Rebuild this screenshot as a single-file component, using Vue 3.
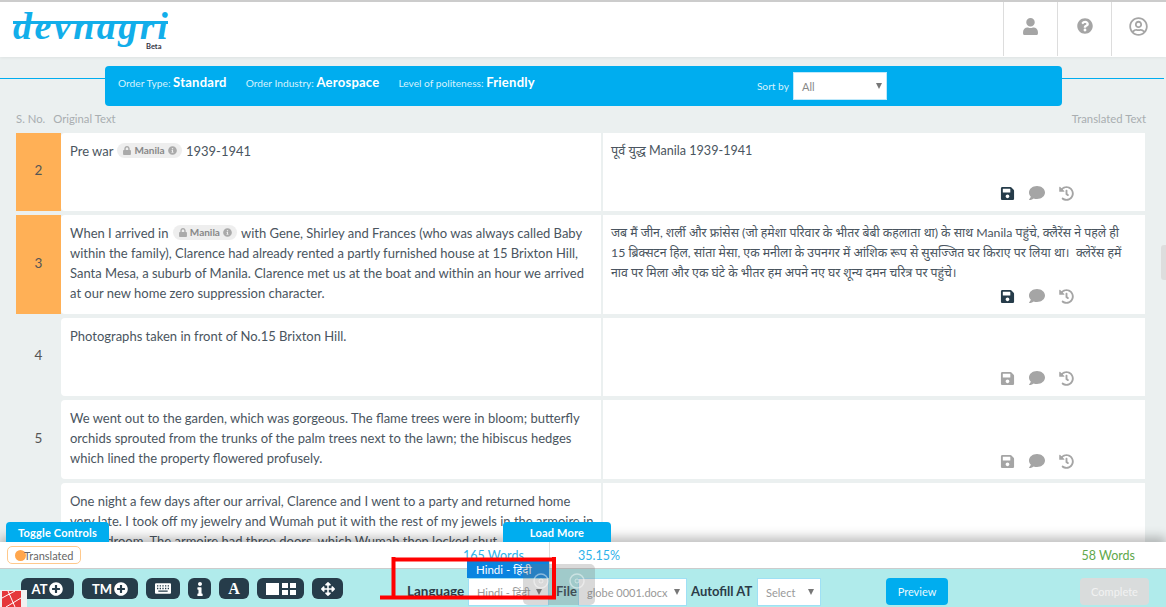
<script setup>
const icons = {
  save: { box: '0 0 448 512', d: 'M433.941 129.941l-83.882-83.882A48 48 0 0 0 316.118 32H48C21.49 32 0 53.49 0 80v352c0 26.51 21.49 48 48 48h352c26.51 0 48-21.49 48-48V163.882a48 48 0 0 0-14.059-33.941zM224 416c-35.346 0-64-28.654-64-64 0-35.346 28.654-64 64-64s64 28.654 64 64c0 35.346-28.654 64-64 64zm96-304.52V212c0 6.627-5.373 12-12 12H76c-6.627 0-12-5.373-12-12V108c0-6.627 5.373-12 12-12h228.52c3.183 0 6.235 1.264 8.485 3.515l3.48 3.48A11.996 11.996 0 0 1 320 111.48z' },
  comment: { box: '0 0 512 512', d: 'M256 32C114.6 32 0 125.1 0 240c0 49.6 21.4 95 57 130.7C44.5 421.1 2.7 466 2.2 466.5c-2.2 2.3-2.8 5.7-1.5 8.7S4.8 480 8 480c66.3 0 116-31.8 140.6-51.4 32.7 12.3 69 19.4 107.4 19.4 141.4 0 256-93.1 256-208S397.4 32 256 32z' },
  history: { box: '0 0 512 512', d: 'M504 255.531c.253 136.64-111.18 248.372-247.82 248.468-59.015.042-113.223-20.53-155.822-54.911-11.077-8.94-11.905-25.541-1.839-35.607l11.267-11.267c8.609-8.609 22.353-9.551 31.891-1.984C173.062 425.135 212.781 440 256 440c101.705 0 184-82.311 184-184 0-101.705-82.311-184-184-184-48.814 0-93.149 18.969-126.068 49.932l50.754 50.754c10.08 10.08 2.941 27.314-11.313 27.314H24c-8.837 0-16-7.163-16-16V38.627c0-14.254 17.234-21.393 27.314-11.314l49.372 49.372C129.209 34.136 189.552 8 256 8c136.81 0 247.747 110.78 248 247.531zm-180.912 78.784l9.823-12.63c8.138-10.463 6.253-25.542-4.21-33.679L288 256.349V152c0-13.255-10.745-24-24-24h-16c-13.255 0-24 10.745-24 24v135.651l65.409 50.874c10.463 8.137 25.541 6.253 33.679-4.21z' },
  user: { box: '0 0 448 512', d: 'M224 256c70.7 0 128-57.3 128-128S294.7 0 224 0 96 57.3 96 128s57.3 128 128 128zm89.6 32h-16.7c-22.2 10.2-46.9 16-72.9 16s-50.6-5.8-72.9-16h-16.7C60.2 288 0 348.2 0 422.4V464c0 26.5 21.5 48 48 48h352c26.5 0 48-21.5 48-48v-41.6c0-74.2-60.2-134.4-134.4-134.4z' },
  question: { box: '0 0 512 512', d: 'M504 256c0 136.997-111.043 248-248 248S8 392.997 8 256C8 119.083 119.043 8 256 8s248 111.083 248 248zM262.655 90c-54.497 0-89.255 22.957-116.549 63.758-3.536 5.286-2.353 12.415 2.715 16.258l34.699 26.31c5.205 3.947 12.621 3.008 16.665-2.122 17.864-22.658 30.113-35.797 57.303-35.797 20.429 0 45.698 13.148 45.698 32.958 0 14.976-12.363 22.667-32.534 33.976C247.128 238.528 216 254.941 216 296v4c0 6.627 5.373 12 12 12h56c6.627 0 12-5.373 12-12v-1.333c0-28.462 83.186-29.647 83.186-106.667 0-58.002-60.165-102-116.531-102zM256 338c-25.365 0-46 20.635-46 46 0 25.364 20.635 46 46 46s46-20.636 46-46c0-25.365-20.635-46-46-46z' },
  account: { box: '0 0 496 512', d: 'M248 104c-53 0-96 43-96 96s43 96 96 96 96-43 96-96-43-96-96-96zm0 144c-26.5 0-48-21.5-48-48s21.5-48 48-48 48 21.5 48 48-21.5 48-48 48zm0-240C111 8 0 119 0 256s111 248 248 248 248-111 248-248S385 8 248 8zm0 448c-49.7 0-95.1-18.3-130.1-48.4 14.9-23 40.4-38.6 69.6-39.5 20.8 6.4 40.6 9.6 60.5 9.6s39.7-3.1 60.5-9.6c29.2 1 54.7 16.5 69.6 39.5-35 30.1-80.4 48.4-130.1 48.4zm162.7-84.1c-24.4-31.4-62.1-51.9-105.1-51.9-10.2 0-26 9.6-57.6 9.6-31.5 0-47.4-9.6-57.6-9.6-42.9 0-80.6 20.5-105.1 51.9C61.9 339.2 48 299.2 48 256c0-110.3 89.7-200 200-200s200 89.7 200 200c0 43.2-13.9 83.2-37.3 115.9z' },
  plus: { box: '0 0 512 512', d: 'M256 8C119 8 8 119 8 256s111 248 248 248 248-111 248-248S393 8 256 8zm144 276c0 6.6-5.4 12-12 12h-92v92c0 6.6-5.4 12-12 12h-56c-6.6 0-12-5.4-12-12v-92h-92c-6.6 0-12-5.4-12-12v-56c0-6.6 5.4-12 12-12h92v-92c0-6.6 5.4-12 12-12h56c6.6 0 12 5.4 12 12v92h92c6.6 0 12 5.4 12 12v56z' },
  info: { box: '0 0 192 512', d: 'M20 424.229h20V279.771H20c-11.046 0-20-8.954-20-20V212c0-11.046 8.954-20 20-20h112c11.046 0 20 8.954 20 20v212.229h20c11.046 0 20 8.954 20 20V492c0 11.046-8.954 20-20 20H20c-11.046 0-20-8.954-20-20v-47.771c0-11.046 8.954-20 20-20zM96 0C56.235 0 24 32.235 24 72s32.235 72 72 72 72-32.235 72-72S135.764 0 96 0z' },
  move: { box: '0 0 512 512', d: 'M352.201 425.775l-79.196 79.196c-9.373 9.373-24.568 9.373-33.941 0l-79.196-79.196c-15.119-15.119-4.411-40.971 16.971-40.97h51.162L228 284H127.196v51.162c0 21.382-25.851 32.09-40.971 16.971L7.029 272.937c-9.373-9.373-9.373-24.569 0-33.941L86.225 159.8c15.119-15.119 40.971-4.411 40.971 16.971V228H228V127.196h-51.23c-21.382 0-32.09-25.851-16.971-40.971l79.196-79.196c9.373-9.373 24.568-9.373 33.941 0l79.196 79.196c15.119 15.119 4.411 40.971-16.971 40.971h-51.162V228h100.804v-51.162c0-21.382 25.851-32.09 40.97-16.971l79.196 79.196c9.373 9.373 9.373 24.569 0 33.941L425.773 352.2c-15.119 15.119-40.971 4.411-40.97-16.971V284H284v100.804h51.23c21.382 0 32.09 25.851 16.971 40.971z' },
  lock: { box: '0 0 448 512', d: 'M400 224h-24v-72C376 68.2 307.8 0 224 0S72 68.2 72 152v72H48c-26.5 0-48 21.5-48 48v192c0 26.5 21.5 48 48 48h352c26.5 0 48-21.5 48-48V272c0-26.5-21.5-48-48-48zm-104 0H152v-72c0-39.7 32.3-72 72-72s72 32.3 72 72v72z' },
  infoCircle: { box: '0 0 512 512', d: 'M256 8C119.043 8 8 119.083 8 256c0 136.997 111.043 248 248 248s248-111.003 248-248C504 119.083 392.957 8 256 8zm0 110c23.196 0 42 18.804 42 42s-18.804 42-42 42-42-18.804-42-42 18.804-42 42-42zm56 254c0 6.627-5.373 12-12 12h-88c-6.627 0-12-5.373-12-12v-24c0-6.627 5.373-12 12-12h12v-64h-12c-6.627 0-12-5.373-12-12v-24c0-6.627 5.373-12 12-12h64c6.627 0 12 5.373 12 12v100h12c6.627 0 12 5.373 12 12v24z' }
}

const headerIcons = [
  { ...icons.user, size: 17 },
  { ...icons.question, size: 16 },
  { ...icons.account, size: 19 }
]

// line breaks kept by hand, the widths of the fallback font differ a little
const rows = [
  { no: 2, done: true, before: 'Pre war', chip: true, after: '1939-1941', hi: 'पूर्व युद्ध Manila 1939-1941' },
  { no: 3, done: true, before: 'When I arrived in', chip: true, after: 'with Gene, Shirley and Frances (who was always called Baby\nwithin the family), Clarence had already rented a partly furnished house at 15 Brixton Hill,\nSanta Mesa, a suburb of Manila. Clarence met us at the boat and within an hour we arrived\nat our new home zero suppression character.', hi: 'जब मैं जीन, शर्ली और फ्रांसेस (जो हमेशा परिवार के भीतर बेबी कहलाता था) के साथ Manila पहुंचे, क्लैरेंस ने पहले ही\n15 ब्रिक्सटन हिल, सांता मेसा, एक मनीला के उपनगर में आंशिक रूप से सुसज्जित घर किराए पर लिया था।  क्लेरेंस हमें\nनाव पर मिला और एक घंटे के भीतर हम अपने नए घर शून्य दमन चरित्र पर पहुंचे।' },
  { no: 4, before: 'Photographs taken in front of No.15 Brixton Hill.', hi: '' },
  { no: 5, before: 'We went out to the garden, which was gorgeous. The flame trees were in bloom; butterfly\norchids sprouted from the trunks of the palm trees next to the lawn; the hibiscus hedges\nwhich lined the property flowered profusely.', hi: '' },
  { no: 6, last: true, before: 'One night a few days after our arrival, Clarence and I went to a party and returned home\nvery late. I took off my jewelry and Wumah put it with the rest of my jewels in the armoire in\nthe bedroom. The armoire had three doors, which Wumah then locked shut', hi: '' }
]

const actions = [icons.save, icons.comment, icons.history]
</script>

<template>
  <div class="page">
    <header class="top">
      <div class="logo">
        <span class="logo-word">devnagri</span>
        <span class="logo-bar"></span>
        <span class="logo-beta">Beta</span>
      </div>
      <div class="top-cells">
        <div v-for="(ic, i) in headerIcons" :key="i" class="top-cell">
          <svg :viewBox="ic.box" class="top-icon" :style="{ width: ic.size + 'px', height: ic.size + 'px' }"><path :d="ic.d" /></svg>
        </div>
      </div>
    </header>

    <div class="order-wrap">
      <div class="order-line left"></div>
      <div class="order-bar">
        <span class="order-item">Order Type: <b>Standard</b></span>
        <span class="order-item">Order Industry: <b>Aerospace</b></span>
        <span class="order-item">Level of politeness: <b>Friendly</b></span>
        <div class="sort">
          <span class="sort-label">Sort by</span>
          <div class="sort-select"><span>All</span><i class="caret"></i></div>
        </div>
      </div>
      <div class="order-line right"></div>
    </div>

    <div class="table-head">
      <span class="th-no">S. No.</span>
      <span>Original Text</span>
      <span class="th-right">Translated Text</span>
    </div>

    <div class="rows">
      <div v-for="r in rows" :key="r.no" class="row" :class="{ last: r.last }">
        <div class="no" :class="{ done: r.done }">{{ r.no }}</div>
        <div class="src">
          {{ r.before }}
          <span v-if="r.chip" class="chip">
            <svg :viewBox="icons.lock.box" class="chip-lock"><path :d="icons.lock.d" /></svg>
            Manila
            <svg :viewBox="icons.infoCircle.box" class="chip-info"><path :d="icons.infoCircle.d" /></svg>
          </span>
          {{ r.after }}
        </div>
        <div class="dst">
          <div class="dst-text">{{ r.hi }}</div>
          <div v-if="!r.last" class="actions" :class="{ done: r.done }">
            <svg v-for="(a, i) in actions" :key="i" :viewBox="a.box" class="act"><path :d="a.d" /></svg>
          </div>
        </div>
      </div>
    </div>

    <div class="scroll-thumb"></div>

    <footer class="foot">
      <button class="tab toggle">Toggle Controls</button>
      <button class="tab more">Load More</button>

      <div class="stats">
        <span class="status"><i class="dot"></i>Translated</span>
        <span class="words">165 Words</span>
        <span class="stat-sep"></span>
        <span class="pct">35.15%</span>
        <span class="green">58 Words</span>
      </div>

      <div class="tools">
        <button class="tool at">AT<svg :viewBox="icons.plus.box" class="plus"><path :d="icons.plus.d" /></svg></button>
        <button class="tool tm">TM<svg :viewBox="icons.plus.box" class="plus"><path :d="icons.plus.d" /></svg></button>
        <button class="tool kb">
          <svg viewBox="0 0 24 16" class="kb-icon">
            <path fill-rule="evenodd" d="M1.500 0h21A1.500 1.500 0 0 1 24 1.500v13a1.500 1.500 0 0 1-1.500 1.500h-21A1.500 1.500 0 0 1 0 14.500v-13A1.500 1.500 0 0 1 1.500 0zM3 3v2h2V3zm4 0v2h2V3zm4 0v2h2V3zm4 0v2h2V3zm4 0v2h2V3zM3 7v2h2V7zm4 0v2h2V7zm4 0v2h2V7zm4 0v2h2V7zm4 0v2h2V7zM5 11v2h14v-2z" />
          </svg>
        </button>
        <button class="tool ib"><svg :viewBox="icons.info.box" class="i-icon"><path :d="icons.info.d" /></svg></button>
        <button class="tool font">A</button>
        <button class="tool grid">
          <span class="square"></span>
          <span class="quad"><i></i><i></i><i></i><i></i></span>
        </button>
        <button class="tool mv"><svg :viewBox="icons.move.box" class="mv-icon"><path :d="icons.move.d" /></svg></button>

        <label class="lbl lang">Language</label>
        <div class="sel s-lang"><span>Hindi - हिंदी</span><i class="caret"></i></div>
        <label class="lbl file">File</label>
        <div class="sel s-file"><span>globe 0001.docx</span><i class="caret"></i></div>
        <label class="lbl auto">Autofill AT</label>
        <div class="sel s-auto"><span>Select</span><i class="caret"></i></div>
        <button class="cta preview">Preview</button>
        <button class="cta complete">Complete</button>
      </div>

      <div class="lang-option">Hindi - हिंदी</div>

      <div class="loader">
        <svg viewBox="0 0 72 41" width="72" height="41" fill="none" stroke="#fff" stroke-opacity=".45">
          <circle cx="18" cy="17" r="7" stroke-width="1.500" />
          <circle cx="18" cy="17" r="2" stroke-width="1" />
          <circle cx="54" cy="17" r="7" stroke-width="1.500" />
          <circle cx="54" cy="17" r="2" stroke-width="1" />
        </svg>
      </div>

      <svg class="brand" viewBox="0 0 27 17" width="27" height="17">
        <rect width="27" height="17" fill="#f1f1f1" />
        <rect x="2" y="1" width="19" height="16" fill="#e5383b" />
        <path d="M2 8l13-7M6 17l15-9M8 1l7 16" stroke="#fff" stroke-width="1" fill="none" />
      </svg>
    </footer>

    <svg class="markup" viewBox="0 0 190 50" width="190" height="50" fill="none" stroke="#f00" stroke-width="4">
      <path d="M14.500 5v42M14 7.500h162M175 5v42M1 45.500h176" />
    </svg>
  </div>
</template>

<style scoped>
.page {
  position: relative;
  height: 607px;
  overflow: hidden;
  background: #ebf0f0;
  font-family: Lato, "Noto Sans", sans-serif;
  color: #4a5560;
}
button {
  font-family: inherit;
  border: none;
  cursor: pointer;
}
.top {
  display: flex;
  justify-content: space-between;
  height: 55px;
  background: #fff;
  border-top: 2px solid #ccc;
  box-shadow: 0 1px 3px rgba(0, 0, 0, 0.06);
}
.logo {
  position: relative;
  margin-left: 13px;
  width: 155px;
  height: 55px;
  z-index: 1;
}
.logo-word {
  display: block;
  margin-top: 5px;
  font: italic 700 38px/38px "Liberation Serif", serif;
  letter-spacing: 2.5px;
  color: #12aeea;
}
.logo-bar {
  position: absolute;
  left: 0;
  width: 155px;
  top: 19px;
  height: 3px;
  background: #12aeea;
}
.logo-beta {
  position: absolute;
  left: 133px;
  top: 41px;
  font-size: 7.5px;
  line-height: 8px;
  font-weight: 700;
  color: #334;
}
.top-cells {
  display: flex;
  margin-right: 1px;
}
.top-cell {
  width: 54px;
  border-left: 1px solid #ddd;
  display: flex;
  align-items: center;
  justify-content: center;
  height: 54px;
  padding-bottom: 6px;
  box-sizing: border-box;
}
.top-icon {
  fill: #a5a5a5;
}
.order-wrap {
  display: flex;
  margin-top: 9px;
}
.order-line {
  height: 1px;
  margin-top: 12px;
  background: #00adef;
}
.order-line.left {
  width: 105px;
}
.order-line.right {
  width: 102px;
}
.order-bar {
  width: 957px;
  height: 40px;
  display: flex;
  align-items: flex-start;
  padding: 8px 0 0 13px;
  box-sizing: border-box;
  background: #00adef;
  border-radius: 4px;
  color: #d6f2fd;
  font-size: 10.2px;
}
.order-item {
  margin-right: 19px;
  line-height: 16px;
}
.order-item b {
  font-size: 13px;
  font-weight: 700;
  color: #fff;
  letter-spacing: 0.25px;
}
.order-item:last-of-type {
  margin-right: 0;
}
.sort {
  display: flex;
  align-items: center;
  margin-left: 222px;
  margin-top: -2px;
}
.sort-label {
  margin-right: 4px;
}
.sort-select {
  width: 94px;
  height: 28px;
  box-sizing: border-box;
  display: flex;
  align-items: center;
  justify-content: space-between;
  padding: 0 4px 0 8px;
  background: #fff;
  border: 1px solid #bfe9fb;
  color: #888;
  font-size: 11px;
}
.caret {
  width: 0;
  height: 0;
  border-left: 3px solid transparent;
  border-right: 3px solid transparent;
  border-top: 6px solid #777;
}
.table-head {
  display: flex;
  padding: 6px 20px 0 16px;
  height: 21px;
  font-size: 11.3px;
  line-height: 14px;
  color: #a9aeb0;
  box-sizing: border-box;
}
.th-no {
  margin-right: 8px;
}
.th-right {
  margin-left: auto;
}
.rows {
  margin-top: 6px;
  padding-left: 16px;
  width: 1145px;
  box-sizing: border-box;
}
.row {
  display: flex;
  min-height: 78px;
  margin-bottom: 4px;
}
.row.last {
  min-height: 99px;
}
.no {
  width: 45px;
  flex: none;
  display: flex;
  align-items: center;
  justify-content: center;
  box-sizing: border-box;
  padding-bottom: 4px;
  font-size: 13.5px;
  color: #555;
}
.no.done {
  background: #ffb056;
}
.src {
  width: 540px;
  flex: none;
  box-sizing: border-box;
  padding: 8px 0 11px 9px;
  background: #fff;
  border-radius: 4px 0 0 4px;
  font-size: 13px;
  line-height: 20px;
  white-space: pre-line;
}
.chip {
  display: inline-flex;
  align-items: center;
  gap: 3px;
  height: 15px;
  padding: 0 5px 0 6px;
  margin: 0 1px;
  vertical-align: 1px;
  border-radius: 8px;
  background: #eee;
  color: #888;
  font-size: 10px;
  font-weight: 700;
  line-height: 15px;
  white-space: nowrap;
}
.chip-lock {
  width: 8px;
  height: 9px;
  fill: #aaa;
}
.chip-info {
  width: 9px;
  height: 9px;
  fill: #aaa;
}
.dst {
  flex: 1;
  display: flex;
  flex-direction: column;
  margin-left: 2px;
  padding: 8px 0 10px 8px;
  background: #fff;
  font-family: Lato, "Noto Sans Devanagari", "Noto Sans", sans-serif;
  font-size: 12.3px;
  line-height: 20px;
}
.row:first-child .dst-text {
  font-size: 12.6px;
}
.dst-text {
  white-space: pre-wrap;
}
.actions {
  display: flex;
  align-items: center;
  justify-content: flex-end;
  gap: 13px;
  margin-top: auto;
  padding-right: 71px;
}
.act {
  width: 15px;
  height: 15px;
  fill: #a5a5a5;
}
.actions .act:nth-child(2) {
  width: 18px;
  height: 16px;
}
.actions.done .act:first-child {
  fill: #263c4a;
}
.scroll-thumb {
  position: absolute;
  right: 0;
  top: 245px;
  width: 5px;
  height: 35px;
  background: #ddd;
  border-radius: 3px 0 0 3px;
}
.foot {
  position: absolute;
  left: 0;
  right: 0;
  bottom: 0;
  height: 65px;
  background: #fff;
  box-shadow: 0 -5px 10px rgba(0, 0, 0, 0.25);
}
.tab {
  position: absolute;
  top: -20px;
  height: 20px;
  color: #fff;
  font-size: 11px;
  font-weight: 700;
  background: #00adef;
  border-radius: 4px 4px 0 0;
  letter-spacing: 0.2px;
}
.toggle {
  left: 6px;
  width: 103px;
}
.more {
  left: 503px;
  width: 108px;
}
.stats {
  position: relative;
  display: flex;
  align-items: center;
  height: 26px;
  font-size: 12.5px;
  border-bottom: 1px solid #ccc;
}
.status {
  display: flex;
  align-items: center;
  height: 18px;
  margin-left: 7px;
  width: 74px;
  box-sizing: border-box;
  padding-left: 7px;
  margin-right: 382px;
  border: 1px solid #ffc98c;
  border-radius: 5px;
  font-size: 11px;
  color: #666;
}
.dot {
  width: 11px;
  height: 11px;
  margin-right: -2px;
  border-radius: 50%;
  background: #ffa64d;
  flex: none;
}
.words {
  width: 86px;
  color: #2db2ea;
}
.stat-sep {
  width: 1px;
  height: 26px;
  background: #ddd;
  margin-right: 28px;
}
.pct {
  color: #2db2ea;
}
.green {
  margin-left: auto;
  margin-right: 31px;
  color: #5fa84b;
}
.tools {
  display: flex;
  align-items: flex-start;
  height: 38px;
  padding: 9px 0 0 21px;
  box-sizing: border-box;
  background: #b0ebeb;
}
.tool {
  display: flex;
  align-items: center;
  justify-content: center;
  height: 21px;
  padding: 0;
  margin-right: 8px;
  background: #263c4a;
  color: #fff;
  border-radius: 6px;
  font-size: 13px;
  font-weight: 700;
}
.at {
  width: 53px;
  gap: 2px;
}
.tm {
  width: 56px;
  gap: 2px;
}
.plus {
  width: 14px;
  height: 14px;
  fill: #fff;
}
.kb {
  width: 34px;
}
.kb-icon {
  width: 16px;
  height: 11px;
  fill: #fff;
}
.ib {
  width: 23px;
}
.i-icon {
  width: 6px;
  height: 14px;
  fill: #fff;
}
.font {
  width: 30px;
  font-family: "Liberation Serif", serif;
  font-size: 16px;
}
.grid {
  width: 47px;
  gap: 3px;
}
.square {
  width: 13px;
  height: 12px;
  background: #fff;
}
.quad {
  display: grid;
  grid-template-columns: 6px 6px;
  grid-auto-rows: 5px;
  gap: 2px;
}
.quad i {
  background: #fff;
}
.mv {
  width: 31px;
  margin-right: 0;
}
.mv-icon {
  width: 14px;
  height: 14px;
  fill: #fff;
}
.lbl {
  margin-top: 5px;
  font-size: 13px;
  font-weight: 700;
  color: #2b3c48;
  white-space: nowrap;
}
.lang {
  margin-left: 64px;
  margin-right: 3px;
  width: 58px;
  font-size: 13.5px;
}
.file {
  margin-left: 7px;
  margin-right: 0;
  width: 22px;
}
.auto {
  margin-left: 4px;
  margin-right: 0;
  width: 66px;
}
.sel {
  height: 28px;
  box-sizing: border-box;
  display: flex;
  align-items: center;
  justify-content: space-between;
  padding: 0 6px 0 8px;
  background: #fff;
  border: 1px solid #9fe0f5;
  color: #999;
  font-size: 11px;
  white-space: nowrap;
  overflow: hidden;
}
.s-lang {
  width: 81px;
}
.s-file {
  width: 109px;
}
.s-auto {
  width: 64px;
}
.cta {
  height: 27px;
  border-radius: 4px;
  color: #eaf8fe;
  font-size: 11px;
}
.preview {
  width: 62px;
  margin-left: 65px;
  background: #00adef;
}
.complete {
  width: 69px;
  margin-left: 132px;
  background: #d9dcdc;
  color: #f2f2f2;
}
.lang-option {
  position: absolute;
  left: 467px;
  top: 19px;
  width: 82px;
  height: 17px;
  padding-left: 9px;
  box-sizing: border-box;
  background: #0a84e0;
  color: #fff;
  font-size: 11.5px;
  line-height: 17px;
}
.loader {
  position: absolute;
  left: 523px;
  top: 22px;
  width: 72px;
  height: 41px;
  border-radius: 5px;
  background: rgba(120, 120, 120, 0.28);
}
.brand {
  position: absolute;
  left: 0;
  bottom: 0;
}
.markup {
  position: absolute;
  left: 379px;
  top: 552px;
}
</style>

<style>
html, body {
  margin: 0;
}
</style>
